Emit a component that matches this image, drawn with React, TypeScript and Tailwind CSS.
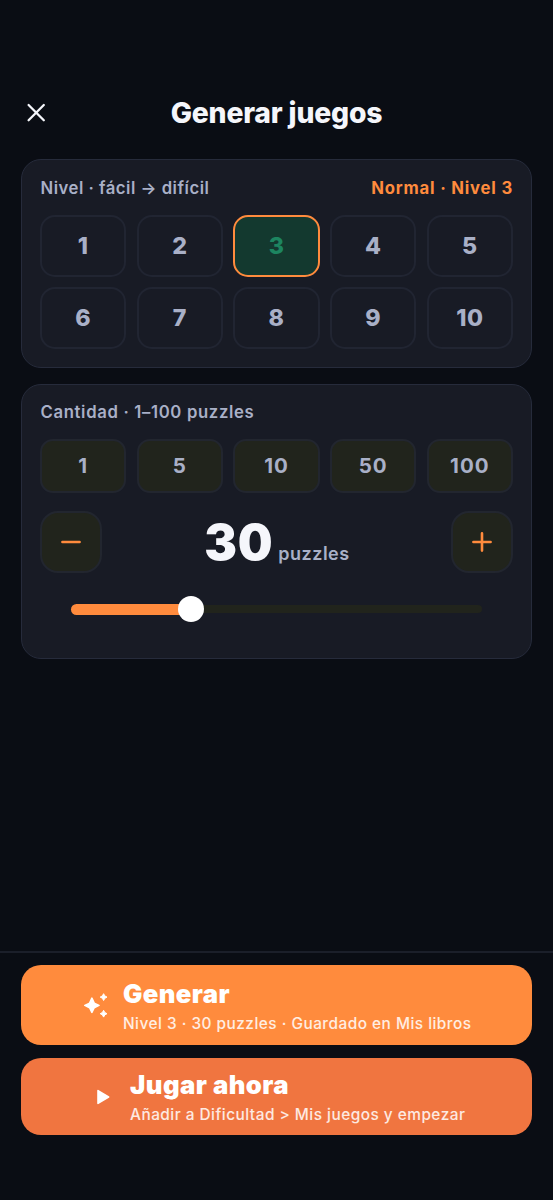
const levels = [1, 2, 3, 4, 5, 6, 7, 8, 9, 10];
const amounts = [1, 5, 10, 50, 100];

function CloseIcon() {
  return (
    <svg width="20" height="20" viewBox="0 0 20 20" fill="none" stroke="#f5f6fb" strokeWidth="2.3" strokeLinecap="round">
      <path d="M2.6 2 17.8 17.2M17.8 2 2.6 17.2" />
    </svg>
  );
}

function SparklesIcon() {
  return (
    <svg width="26" height="26" viewBox="0 0 26 26" fill="#fff" stroke="#fff" strokeLinejoin="round">
      <path strokeWidth="1.6" d="M8.9 6.2 11.2 11.1 16 13.4 11.2 15.7 8.9 20.4 6.6 15.7 1.8 13.4 6.6 11.1Z" />
      <path strokeWidth="1" d="M20.6 1.7 21.8 3.9 24 5.1 21.8 6.3 20.6 8.5 19.4 6.3 17.2 5.1 19.4 3.9Z" />
      <path strokeWidth="1" d="M20.6 18.3 21.8 20.5 24 21.7 21.8 22.9 20.6 25.1 19.4 22.9 17.2 21.7 19.4 20.5Z" />
    </svg>
  );
}

function PlayIcon() {
  return (
    <svg width="14" height="16" viewBox="0 0 14 16" fill="#fff" stroke="#fff" strokeWidth="1.6" strokeLinejoin="round">
      <path d="M2 1.6 12.6 8 2 14.4Z" />
    </svg>
  );
}

function StepButton({ plus = false }: { plus?: boolean }) {
  return (
    <button className="flex size-[62px] items-center justify-center rounded-[18px] border-2 border-[#22262f] bg-[#21241c]">
      <svg width="20" height="20" viewBox="0 0 20 20" fill="none" stroke="#ff8b3d" strokeWidth="2.6" strokeLinecap="round">
        <path d={plus ? "M1.4 10H18.6M10 1.4V18.6" : "M1.4 10H18.6"} />
      </svg>
    </button>
  );
}

export default function App() {
  return (
    <div className="flex h-[1200px] w-[553px] flex-col bg-[#0a0d14] font-['Inter',sans-serif] text-[#a9b0c7]">
      <header className="mt-[86px] grid h-[53px] grid-cols-[1fr_auto_1fr] items-center px-[26px]">
        <button aria-label="Cerrar"><CloseIcon /></button>
        <h1 className="pt-px text-[28.3px] leading-[34px] font-extrabold tracking-[-0.18px] text-[#f5f6fb]">Generar juegos</h1>
      </header>

      <main className="mt-[20px] flex flex-col gap-[16px] px-[21px]">
        <section className="h-[209px] rounded-[20px] border border-[#262b3b] bg-[#181b25] px-[18px] pt-[18px]">
          <div className="flex justify-between pl-[0.5px] text-[16.7px] leading-[21px]">
            <span className="font-semibold tracking-[0.51px]">Nivel · fácil → difícil</span>
            <span className="font-bold tracking-[0.8px] text-[#ff8b3d]">Normal · Nivel 3</span>
          </div>
          <div className="mt-[16px] grid grid-cols-5 gap-x-[10.3px] gap-y-[10px]">
            {levels.map((n) => (
              <button
                key={n}
                className={
                  n === 3
                    ? "h-[62px] rounded-[15px] border-[2.5px] border-[#ff8b3d] bg-[#13392f] text-[23.2px] font-extrabold tracking-[0.5px] text-[#1d8560]"
                    : "h-[62px] rounded-[15px] border-2 border-[#212532] text-[23.2px] font-extrabold tracking-[0.5px]"
                }
              >
                {n}
              </button>
            ))}
          </div>
        </section>

        <section className="h-[275px] rounded-[20px] border border-[#262b3b] bg-[#181b25] px-[18px] pt-[17px]">
          <div className="pl-[0.5px] text-[16.7px] leading-[21px] font-semibold tracking-[0.66px]">Cantidad · 1–100 puzzles</div>
          <div className="mt-[16px] grid grid-cols-5 gap-x-[10.3px]">
            {amounts.map((n) => (
              <button key={n} className="h-[54px] rounded-[13px] border-2 border-[#22262f] bg-[#21241c] pt-px text-[20.5px] font-bold tracking-[1px]">
                {n}
              </button>
            ))}
          </div>
          <div className="mt-[18px] flex h-[62px] items-center justify-between">
            <StepButton />
            <div className="flex items-baseline gap-[5px] pt-[2px] pl-px">
              <span className="text-[49px] leading-[60px] font-black tracking-[0.64px] text-[#f5f6fb]">30</span>
              <span className="text-[18px] font-semibold tracking-[0.5px]">puzzles</span>
            </div>
            <StepButton plus />
          </div>
          <div className="mx-[31px] mt-[23px] flex h-[26px] items-center">
            <div className="h-[11px] w-[109px] rounded-l-full bg-[#ff8b3d]" />
            <div className="z-10 -mx-[2px] size-[26px] shrink-0 rounded-full bg-white" />
            <div className="h-[8px] flex-1 rounded-r-full bg-[#21241c]" />
          </div>
        </section>
      </main>

      <footer className="mt-auto flex h-[249px] flex-col gap-[13px] border-t-2 border-[#1b1f2a] px-[21px] pt-[12px]">
        <button className="flex h-[80px] items-center rounded-[20px] bg-[#ff8b3d] pl-[62px] text-left text-white">
          <SparklesIcon />
          <span className="ml-[14px] flex flex-col">
            <span className="text-[25.7px] leading-[31px] font-black tracking-[0.4px]">Generar</span>
            <span className="mt-[4px] -mb-px text-[15.4px] leading-[21px] font-medium tracking-[0.48px] text-white/85">Nivel 3 · 30 puzzles · Guardado en Mis libros</span>
          </span>
        </button>
        <button className="flex h-[77px] items-center rounded-[20px] bg-[#f07540] pl-[75px] text-left text-white">
          <PlayIcon />
          <span className="ml-[20px] flex flex-col">
            <span className="text-[25.7px] leading-[31px] font-black tracking-[0.45px]">Jugar ahora</span>
            <span className="mt-[4px] -mb-px text-[15.4px] leading-[21px] font-medium tracking-[0.48px] text-white/85">Añadir a Dificultad &gt; Mis juegos y empezar</span>
          </span>
        </button>
      </footer>
    </div>
  );
}
